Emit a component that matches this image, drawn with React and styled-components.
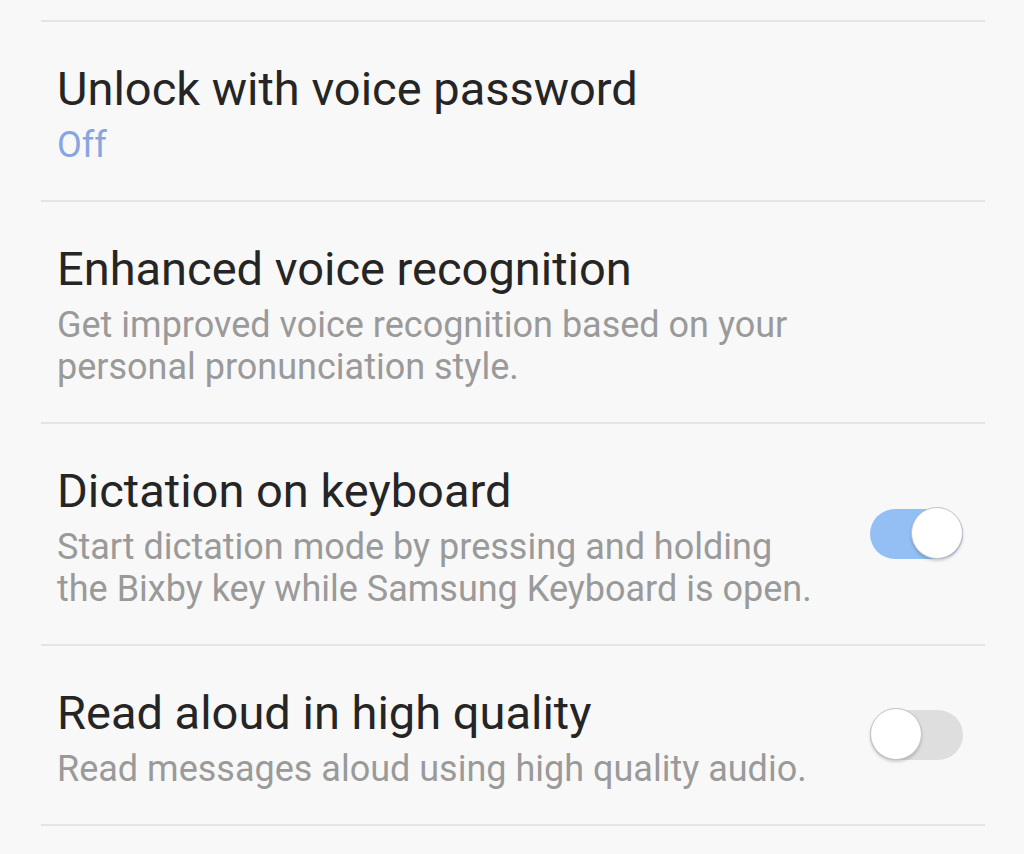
import React, { useState } from "react";
import styled, { createGlobalStyle } from "styled-components";

const GlobalStyle = createGlobalStyle`
  html, body {
    margin: 0;
    padding: 0;
    background: #f8f8f8;
  }
  body {
    font-family: Roboto, "Noto Sans", sans-serif;
  }
`

const Page = styled.div`
  width: 1024px;
  height: 854px;
  overflow: hidden;
  background: #f8f8f8;
  padding-top: 20px;
  box-sizing: border-box;
`
const List = styled.div`
  display: flex;
  flex-direction: column;
  margin: 0 39px 0 41px;
  border-top: 2px solid #e4e4e4;
`
const Row = styled.div`
  display: flex;
  align-items: center;
  justify-content: space-between;
  box-sizing: border-box;
  height: ${props => props.tall ? "222px" : "180px"};
  padding: 4px 22px 0 16px;
  border-bottom: 2px solid #e4e4e4;
`
const TextBlock = styled.div`
  display: flex;
  flex-direction: column;
  max-width: 768px;
`
const Title = styled.div`
  font-size: 47px;
  line-height: 56px;
  color: #252525;
`
const Summary = styled.div`
  margin-top: 7px;
  font-size: 36px;
  line-height: 42px;
  color: ${props => props.accent ? "#87a5e2" : "#9a9a9a"};
`
const Track = styled.button`
  position: relative;
  flex-shrink: 0;
  width: 93px;
  height: 50px;
  margin-top: -4px;
  border: none;
  padding: 0;
  border-radius: 25px;
  background: ${props => props.on ? "#93bff5" : "#dedede"};
  cursor: pointer;
`
const Knob = styled.span`
  position: absolute;
  top: -2px;
  left: ${props => props.on ? "41px" : "0"};
  width: 52px;
  height: 52px;
  box-sizing: border-box;
  border-radius: 50%;
  background: #fff;
  border: 1px solid #c4c4c4;
  box-shadow: 0 2px 3px rgba(0, 0, 0, 0.18);
`

const Toggle = ({ initial }) => {
  const [on, setOn] = useState(initial)
  return (
    <Track on={on ? 1 : 0} onClick={() => setOn(!on)}>
      <Knob on={on ? 1 : 0} />
    </Track>
  )
}

const App = () => {
  return (
    <Page>
      <GlobalStyle />
      <List>
        <Row>
          <TextBlock>
            <Title>Unlock with voice password</Title>
            <Summary accent>Off</Summary>
          </TextBlock>
        </Row>
        <Row tall>
          <TextBlock>
            <Title>Enhanced voice recognition</Title>
            <Summary>Get improved voice recognition based on your personal pronunciation style.</Summary>
          </TextBlock>
        </Row>
        <Row tall>
          <TextBlock>
            <Title>Dictation on keyboard</Title>
            <Summary>Start dictation mode by pressing and holding the Bixby key while Samsung Keyboard is open.</Summary>
          </TextBlock>
          <Toggle initial={true} />
        </Row>
        <Row>
          <TextBlock>
            <Title>Read aloud in high quality</Title>
            <Summary>Read messages aloud using high quality audio.</Summary>
          </TextBlock>
          <Toggle initial={false} />
        </Row>
      </List>
    </Page>
  )
}

export default App
